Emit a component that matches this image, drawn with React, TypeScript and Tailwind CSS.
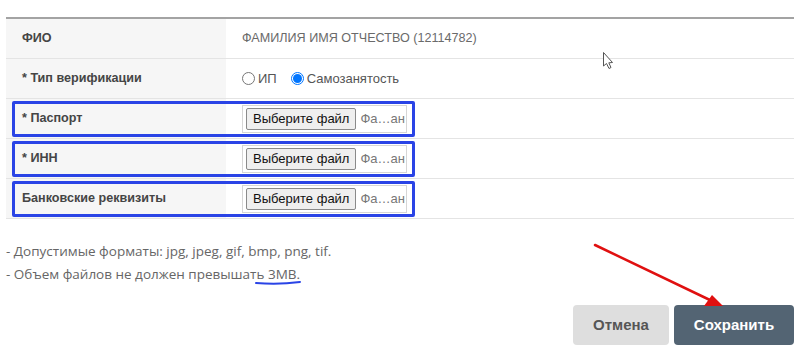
const arial = { fontFamily: '"Liberation Sans", Arial, sans-serif' };
const open = { fontFamily: '"Open Sans", "Liberation Sans", sans-serif' };

const Row = ({
  label,
  children,
  marked,
}: {
  label: string;
  children: React.ReactNode;
  marked?: boolean;
}) => (
  <div className="relative grid grid-cols-[220px_1fr] h-[40px] border-b border-[#e4e4e4]">
    <div
      className="bg-[#f6f6f6] flex items-center pl-4 text-[12.6px] font-bold text-[#454545]"
      style={arial}
    >
      {label}
    </div>
    <div className="flex items-center pl-4">{children}</div>
    {marked && (
      <div className="absolute left-[6px] top-[2px] w-[403px] h-[36px] border-[3px] border-[#2a44e6] rounded-[2px] pointer-events-none"></div>
    )}
  </div>
);

const FileInput = () => (
  <div
    className="flex items-center gap-1 w-[165px] h-[28px] border border-[#d6d6d6] px-[3px] text-[13px]"
    style={arial}
  >
    <span className="px-[6px] h-[22px] flex items-center bg-[#efefef] border border-[#8a8a8a] rounded-[2px] text-[#111] whitespace-nowrap">
      Выберите файл
    </span>
    <span className="text-[#777] whitespace-nowrap">Фа…ан</span>
  </div>
);

const Radio = ({ checked }: { checked?: boolean }) =>
  checked ? (
    <span className="w-[13px] h-[13px] rounded-full border border-[#0075ff] flex items-center justify-center">
      <span className="w-[9px] h-[9px] rounded-full bg-[#0075ff]"></span>
    </span>
  ) : (
    <span className="w-[13px] h-[13px] rounded-full border border-[#767676]"></span>
  );

export default function App() {
  return (
    <div className="relative w-[800px] h-[361px] bg-white overflow-hidden">
      <div className="pt-[17px] px-[6px]">
        <div className="border-t-2 border-[#a3a3a3]">
          <Row label="ФИО">
            <span className="text-[12.6px] text-[#6a6a6a]" style={arial}>
              ФАМИЛИЯ ИМЯ ОТЧЕСТВО (12114782)
            </span>
          </Row>
          <Row label="* Тип верификации">
            <div className="flex items-center text-[13px] text-[#555]" style={arial}>
              <Radio />
              <span className="ml-[3px]">ИП</span>
              <span className="ml-[14px]"></span>
              <Radio checked />
              <span className="ml-[3px]">Самозанятость</span>
            </div>
          </Row>
          <Row label="* Паспорт" marked>
            <FileInput />
          </Row>
          <Row label="* ИНН" marked>
            <FileInput />
          </Row>
          <Row label="Банковские реквизиты" marked>
            <FileInput />
          </Row>
        </div>

        <div className="mt-[21px] text-[13.5px] leading-[23px] text-[#666]" style={open}>
          <p>- Допустимые форматы: jpg, jpeg, gif, bmp, png, tif.</p>
          <p>- Объем файлов не должен превышать 3MB.</p>
        </div>

        <div className="flex justify-end gap-[5px] mt-[19px] text-[15px] font-bold" style={arial}>
          <button className="w-[96px] h-[40px] rounded-[4px] bg-[#dedede] text-[#555]">
            Отмена
          </button>
          <button className="w-[120px] h-[40px] rounded-[4px] bg-[#536473] text-white">
            Сохранить
          </button>
        </div>
      </div>

      <svg
        className="absolute inset-0 pointer-events-none"
        width="800"
        height="361"
        viewBox="0 0 800 361"
      >
        <path
          d="M256 283 Q278 285 300 282"
          stroke="#2a44e6"
          strokeWidth="2"
          fill="none"
          strokeLinecap="round"
        />
        <line x1="595" y1="245" x2="712" y2="301" stroke="#e01010" strokeWidth="2.5" strokeLinecap="round" />
        <polygon points="723,306 704,306 712,295" fill="#e01010" />
        <path
          d="M603.5 52.5 L603.5 66 L606.5 63.5 L609 68.5 L611 67.5 L608.8 62.8 L612.5 62.5 Z"
          fill="#fff"
          stroke="#555"
          strokeWidth="1"
        />
      </svg>
    </div>
  );
}
